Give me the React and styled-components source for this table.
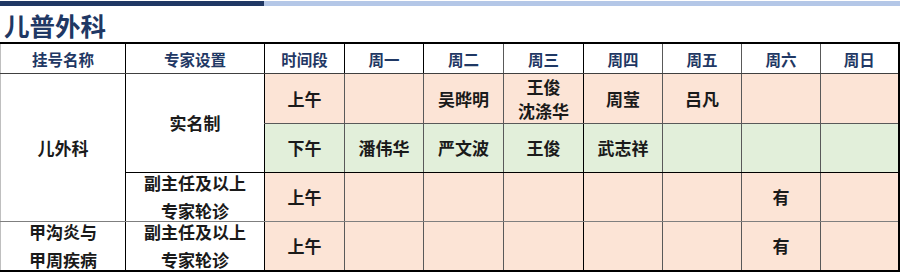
import React from 'react'
import styled, { createGlobalStyle } from 'styled-components'

const Global = createGlobalStyle`
  body {
    margin: 0;
    background: #fff;
    font-family: "Noto Sans CJK SC", "Noto Sans", sans-serif;
  }
`

const Page = styled.div`
  width: 900px;
  height: 273px;
  overflow: hidden;
`

const TopBar = styled.div`
  display: flex;
  height: 5px;
  margin-top: 1px;
`

const BarDark = styled.div`
  width: 264px;
  background: #203864;
`

const BarLight = styled.div`
  flex: 1;
  background: #b4c7e7;
`

const Title = styled.h1`
  margin: 0;
  height: 36px;
  padding-left: 4px;
  font-size: 25.5px;
  line-height: 38px;
  font-weight: 700;
  color: #1f3864;
`

const Table = styled.table`
  width: 899px;
  table-layout: fixed;
  border-collapse: collapse;
  border-top: 2px solid #000;
  border-bottom: 2px solid #000;
  border-right: 2px solid #000;
  border-left: 1px solid #bfbfbf;
`

const Th = styled.th`
  height: 29px;
  padding: 0;
  font-size: 15.5px;
  line-height: 20px;
  font-weight: 700;
  color: #1f3864;
  text-align: center;
  border-left: 1px solid ${p => p.$line || '#000'};
  border-bottom: 1px solid #404040;
  background: #fff;
`

const Td = styled.td`
  height: ${p => p.$h || 48}px;
  padding: 0;
  font-size: 17px;
  font-weight: 700;
  color: #1a1a1a;
  text-align: center;
  line-height: 24px;
  background: ${p => p.$bg || '#fff'};
  border-left: 1px solid ${p => p.$line || '#595959'};
  border-bottom: 1px solid ${p => p.$bottom || '#595959'};
`

// two lines that sit wider apart than the row allows, as in the sheet
const Tall = styled.div`
  line-height: 28px;
  margin: -4px 0;
`

const AM = '#fce4d6'
const PM = '#e2efda'

const widths = [125, 139, 80, 79, 80, 80, 79, 79, 79, 78]
const days = ['周一', '周二', '周三', '周四', '周五', '周六', '周日']

const Cells = ({ values, bg, bottom, h }) =>
  values.map((v, i) => (
    <Td key={i} $bg={bg} $bottom={bottom} $h={h} $line={i === 3 ? '#000' : '#595959'}>
      {v}
    </Td>
  ))

const App = () => (
  <Page>
    <Global />
    <TopBar>
      <BarDark />
      <BarLight />
    </TopBar>
    <Title>儿普外科</Title>
    <Table>
      <colgroup>
        {widths.map((w, i) => <col key={i} style={{ width: w }} />)}
      </colgroup>
      <thead>
        <tr>
          <Th $line="#bfbfbf">挂号名称</Th>
          <Th>专家设置</Th>
          <Th>时间段</Th>
          {days.map((d, i) => (
            <Th key={d} $line={i < 2 || i === 3 ? '#000' : '#595959'}>{d}</Th>
          ))}
        </tr>
      </thead>
      <tbody>
        <tr>
          <Td rowSpan={3} $line="#bfbfbf" $bottom="#7f7f7f">儿外科</Td>
          <Td rowSpan={2} $line="#000" $bottom="#000">实名制</Td>
          <Td $bg={AM} $line="#000" $h={49}>上午</Td>
          <Cells bg={AM} h={49} values={['', '吴晔明', <>王俊<br />沈涤华</>, '周莹', '吕凡', '', '']} />
        </tr>
        <tr>
          <Td $bg={PM} $line="#000" $bottom="#000">下午</Td>
          <Cells bg={PM} bottom="#000" values={['潘伟华', '严文波', '王俊', '武志祥', '', '', '']} />
        </tr>
        <tr>
          <Td $line="#000" $bottom="#7f7f7f"><Tall>副主任及以上<br />专家轮诊</Tall></Td>
          <Td $bg={AM} $line="#000" $bottom="#7f7f7f">上午</Td>
          <Cells bg={AM} bottom="#7f7f7f" values={['', '', '', '', '', '有', '']} />
        </tr>
        <tr>
          <Td $line="#bfbfbf" $bottom="#000"><Tall>甲沟炎与<br />甲周疾病</Tall></Td>
          <Td $line="#000" $bottom="#000"><Tall>副主任及以上<br />专家轮诊</Tall></Td>
          <Td $bg={AM} $line="#000" $bottom="#000">上午</Td>
          <Cells bg={AM} bottom="#000" values={['', '', '', '', '', '有', '']} />
        </tr>
      </tbody>
    </Table>
  </Page>
)

export default App
